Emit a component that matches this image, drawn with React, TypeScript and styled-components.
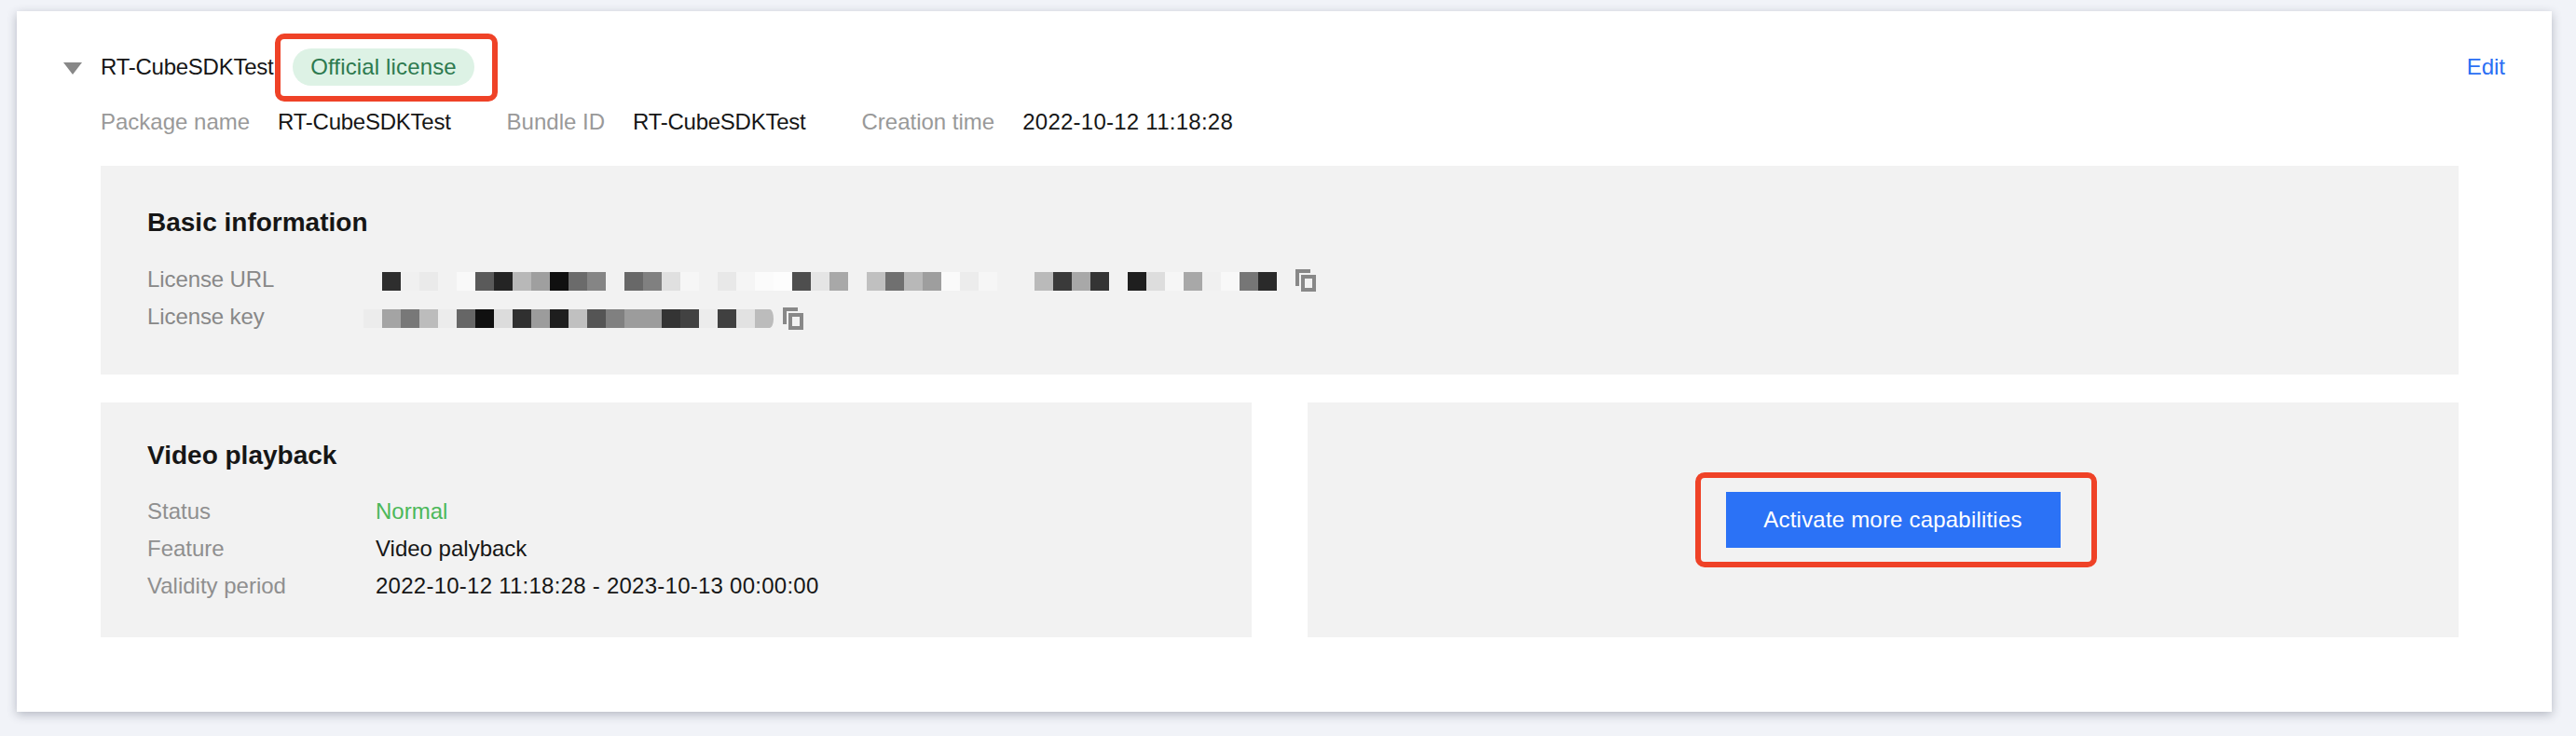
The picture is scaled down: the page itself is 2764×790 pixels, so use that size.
import React, { FC } from 'react';
import styled, { createGlobalStyle } from 'styled-components';

const GlobalStyle = createGlobalStyle`
    html, body {
        margin: 0;
        padding: 0;
        background: #f1f3f8;
    }
    body {
        font-family: "Liberation Sans", Arial, sans-serif;
        color: #161616;
    }
`;

// grey values of the blurred-out license values, one per 20px block
const urlBlocks = [
    0xf2, 0x2e, 0xf0, 0xea, 0xf2, 0xf9, 0x5a, 0x24, 0xb8, 0x9f, 0x10, 0x6b, 0x85, 0xf2, 0x68, 0x80,
    0xe0, 0xf6, 0xf2, 0xe8, 0xf5, 0xfb, 0xfd, 0x4e, 0xe5, 0xa8, 0xf2, 0xc0, 0x70, 0xb8, 0x9e, 0xfa,
    0xec, 0xf6, 0xf2, 0xf2, 0xba, 0x3a, 0xa8, 0x34, 0xf2, 0x1f, 0xdd, 0xf6, 0xa8, 0xf0, 0xf8, 0x76, 0x2a,
];
const keyBlocks = [
    0xec, 0xa4, 0x78, 0xbc, 0xec, 0x66, 0x10, 0xdc, 0x30, 0x9c, 0x1e, 0xc0, 0x55, 0x80, 0x9c, 0x9c, 0x34, 0x42,
    0xec, 0x40, 0xe2, 0xbc,
];

const CopyIcon: FC<{ lift?: boolean }> = ({ lift }) => (
    <CopySlot $lift={lift}>
        <svg width="22" height="24" viewBox="0 0 22 24">
            <path d="M0 0H16V4H4V18H0z" fill="#888" />
            <path d="M6 6H22V24H6zM10 10V20H18V10z" fill="#888" fillRule="evenodd" />
        </svg>
    </CopySlot>
);

const Field: FC<{ label: string; children: React.ReactNode }> = ({ label, children }) => (
    <>
        <MetaLabel>{label}</MetaLabel>
        <MetaValue>{children}</MetaValue>
    </>
);

const Mosaic: FC<{ blocks: number[]; gap: number; rounded?: boolean }> = ({ blocks, gap, rounded }) => (
    <BlockRow $gap={gap} $rounded={rounded}>
        {blocks.map((v, i) => (
            <Block key={i} style={{ background: `rgb(${v},${v},${v})` }} />
        ))}
    </BlockRow>
);

const App: FC = () => (
    <>
        <GlobalStyle />
        <Page>
            <Card>
                <Header>
                    <Caret />
                    <Title>RT-CubeSDKTest</Title>
                    <TagHighlight>
                        <Badge>Official license</Badge>
                    </TagHighlight>
                    <EditLink>Edit</EditLink>
                </Header>
                <MetaRow>
                    <Field label="Package name"><AppName>RT-CubeSDKTest</AppName></Field>
                    <Field label="Bundle ID"><AppName>RT-CubeSDKTest</AppName></Field>
                    <Field label="Creation time"><DateText>2022-10-12 11:18:28</DateText></Field>
                </MetaRow>
                <BasicPanel>
                    <PanelTitle>Basic information</PanelTitle>
                    <SecretRow>
                        <SecretLabel>License URL</SecretLabel>
                        <Mosaic blocks={urlBlocks} gap={20} />
                        <CopyIcon lift />
                    </SecretRow>
                    <SecretRow>
                        <SecretLabel>License key</SecretLabel>
                        <Mosaic blocks={keyBlocks} gap={10} rounded />
                        <CopyIcon />
                    </SecretRow>
                </BasicPanel>
                <BottomGrid>
                    <PlaybackPanel>
                        <PlaybackTitle>Video playback</PlaybackTitle>
                        <InfoRow>
                            <InfoLabel>Status</InfoLabel>
                            <StatusOk>Normal</StatusOk>
                        </InfoRow>
                        <InfoRow>
                            <InfoLabel>Feature</InfoLabel>
                            <span>Video palyback</span>
                        </InfoRow>
                        <InfoRow>
                            <InfoLabel>Validity period</InfoLabel>
                            <DateText>2022-10-12 11:18:28 - 2023-10-13 00:00:00</DateText>
                        </InfoRow>
                    </PlaybackPanel>
                    <ActionPanel>
                        <ButtonHighlight>
                            <PrimaryButton>Activate more capabilities</PrimaryButton>
                        </ButtonHighlight>
                    </ActionPanel>
                </BottomGrid>
            </Card>
        </Page>
    </>
);
export default App;

const Page = styled.div`
    width: 2764px;
    height: 790px;
    padding: 12px 26px 26px 18px;
    box-sizing: border-box;
    overflow: hidden;
`;

const Card = styled.div`
    width: 2720px;
    height: 752px;
    box-sizing: border-box;
    padding: 24px 100px 0 90px;
    background: #fff;
    box-shadow: 0 3px 10px rgba(54, 58, 80, 0.32);
`;

const Header = styled.div`
    display: flex;
    align-items: center;
    height: 72px;
    position: relative;
    font-size: 24px;
`;

const Caret = styled.span`
    position: absolute;
    left: -40px;
    top: 31px;
    width: 0;
    height: 0;
    border-left: 10px solid transparent;
    border-right: 10px solid transparent;
    border-top: 13px solid #888;
`;

const Title = styled.span`
    flex: none;
    width: 187px;
    letter-spacing: -0.25px;
    white-space: nowrap;
    color: #161616;
`;

const Highlight = styled.div`
    display: flex;
    flex: none;
    align-items: center;
    justify-content: center;
    box-sizing: border-box;
    padding-right: 6px;
    border: 6px solid #ef4227;
    border-radius: 10px;
`;

const TagHighlight = styled(Highlight)`
    width: 239px;
    height: 73px;
`;

const ButtonHighlight = styled(Highlight)`
    width: 431px;
    height: 102px;
`;

const Badge = styled.span`
    display: flex;
    align-items: center;
    justify-content: center;
    width: 195px;
    height: 40px;
    border-radius: 20px;
    background: #ddf2e5;
    color: #2d7a4f;
    font-size: 24px;
    letter-spacing: 0.15px;
`;

const EditLink = styled.a`
    margin-left: auto;
    margin-right: -50px;
    color: #2a6ff4;
    font-size: 24px;
`;

const MetaRow = styled.div`
    display: flex;
    align-items: center;
    height: 34px;
    margin-top: 6px;
    font-size: 24px;
`;

const MetaLabel = styled.span`
    color: #999;
    margin-right: 30px;
`;

const MetaValue = styled.span`
    color: #161616;
    margin-right: 60px;
`;

const AppName = styled.span`
    letter-spacing: -0.25px;
`;

const DateText = styled.span`
    letter-spacing: 0.25px;
`;

const BasicPanel = styled.div`
    height: 224px;
    margin-top: 30px;
    padding: 44px 50px 0;
    box-sizing: border-box;
    background: #f2f2f2;
`;

const PanelTitle = styled.div`
    font-size: 28px;
    font-weight: 700;
    line-height: 34px;
    color: #161616;
    margin-bottom: 26px;
`;

const PlaybackTitle = styled(PanelTitle)`
    margin-bottom: 23px;
`;

const SecretRow = styled.div`
    display: flex;
    align-items: center;
    height: 40px;
`;

const SecretLabel = styled.span`
    width: 232px;
    padding-bottom: 4px;
    font-size: 24px;
    letter-spacing: -0.1px;
    color: #888;
`;

const BlockRow = styled.div<{ $gap: number; $rounded?: boolean }>`
    display: flex;
    height: 20px;
    margin-right: ${p => p.$gap}px;
    i:last-child {
        border-radius: ${p => (p.$rounded ? '0 4px 4px 0 / 0 10px 10px 0' : '0')};
    }
`;

const Block = styled.i`
    display: block;
    width: 20px;
    height: 20px;
`;

const CopySlot = styled.span<{ $lift?: boolean }>`
    display: block;
    height: 24px;
    margin-top: ${p => (p.$lift ? -2 : 0)}px;
`;

const BottomGrid = styled.div`
    display: grid;
    grid-template-columns: 1235px 1235px;
    column-gap: 60px;
    margin-top: 30px;
`;

const PlaybackPanel = styled.div`
    height: 252px;
    padding: 40px 50px 0;
    box-sizing: border-box;
    background: #f2f2f2;
`;

const InfoRow = styled.div`
    display: flex;
    align-items: center;
    height: 40px;
    font-size: 24px;
    color: #161616;
`;

const InfoLabel = styled.span`
    width: 245px;
    color: #8f8f8f;
`;

const StatusOk = styled.span`
    color: #4cb85a;
`;

const ActionPanel = styled.div`
    height: 252px;
    display: flex;
    align-items: center;
    justify-content: center;
    padding-left: 27px;
    box-sizing: border-box;
    background: #f2f2f2;
`;

const PrimaryButton = styled.button`
    width: 359px;
    height: 60px;
    border: 0;
    padding: 0;
    background: #2b72f6;
    color: #fff;
    font-family: inherit;
    font-size: 24px;
    letter-spacing: 0.2px;
`;
